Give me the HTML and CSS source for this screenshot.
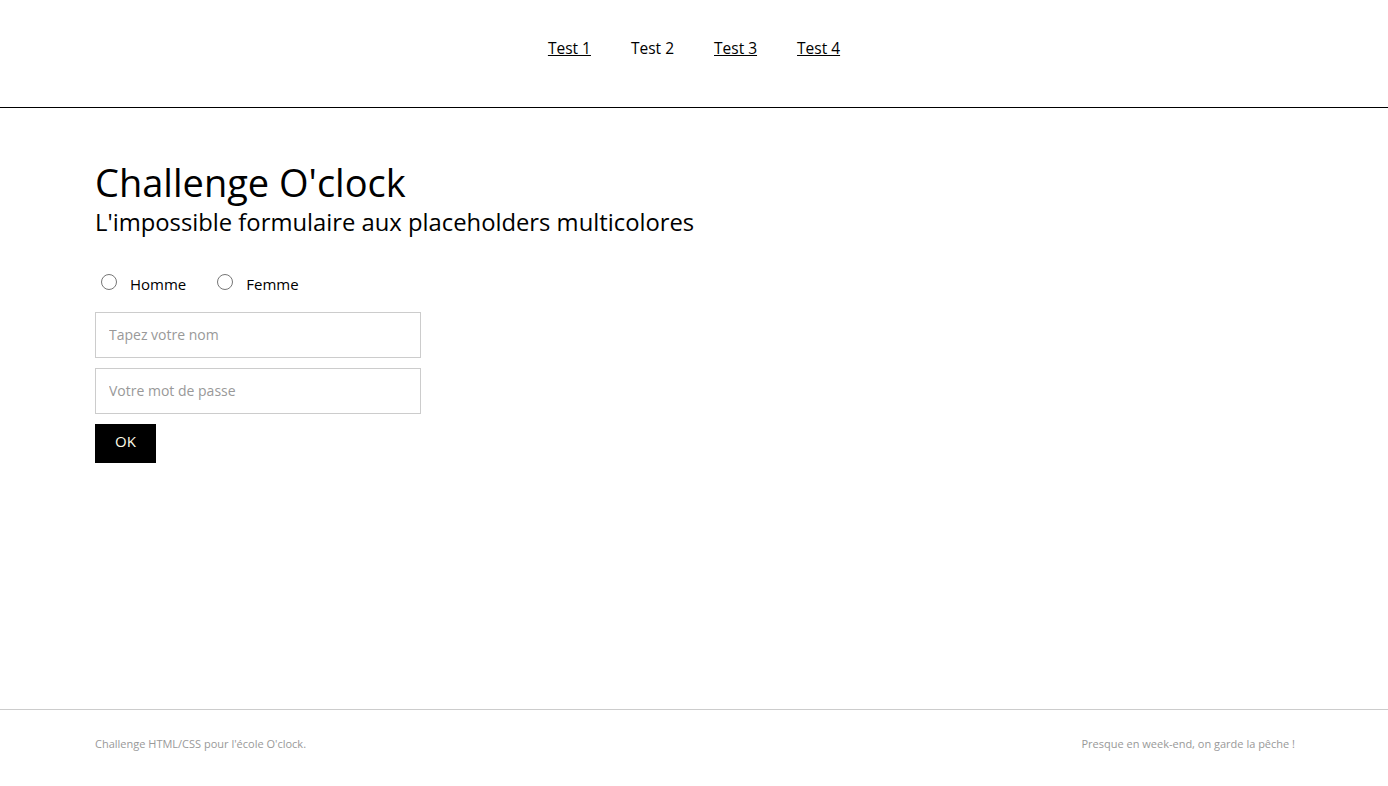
FILE: index.html
```html
<!DOCTYPE html>
<html lang="fr">
<head>
<meta charset="utf-8">
<title>Challenge O'clock</title>
<link rel="stylesheet" href="styles.css">
</head>
<body>
<header class="header">
  <nav class="nav">
    <a class="nav-link" href="#">Test 1</a>
    <span class="nav-link nav-current">Test 2</span>
    <a class="nav-link" href="#">Test 3</a>
    <a class="nav-link" href="#">Test 4</a>
  </nav>
</header>
<main class="main">
  <h1 class="title">Challenge O'clock</h1>
  <h2 class="subtitle">L'impossible formulaire aux placeholders multicolores</h2>
  <form class="form">
    <div class="radios">
      <label class="radio"><input type="radio" name="g"><span>Homme</span></label>
      <label class="radio"><input type="radio" name="g"><span>Femme</span></label>
    </div>
    <input class="field" type="text" placeholder="Tapez votre nom">
    <input class="field" type="password" placeholder="Votre mot de passe">
    <button class="btn" type="button">OK</button>
  </form>
</main>
<footer class="footer">
  <p class="foot-text">Challenge HTML/CSS pour l'école O'clock.</p>
  <p class="foot-text">Presque en week-end, on garde la pêche !</p>
</footer>
</body>
</html>
```
FILE: styles.css
```css
* { box-sizing: border-box; }
html, body { margin: 0; padding: 0; }
body {
  font-family: "Open Sans", "Liberation Sans", sans-serif;
  color: #000;
  background: #fff;
  min-height: 786px;
  display: flex;
  flex-direction: column;
}
.header {
  height: 108px;
  border-bottom: 1px solid #000;
  display: flex;
  justify-content: center;
  align-items: flex-start;
  padding-top: 36px;
}
.nav { display: flex; gap: 40px; }
.nav-link {
  color: #000;
  font-size: 15.5px;
  line-height: 24px;
  text-decoration: underline;
}
.nav-current { text-decoration: none; }
.main {
  flex: 1;
  padding: 52px 95px 0;
}
.title {
  margin: 0;
  font-size: 38px;
  font-weight: 400;
  line-height: 44px;
}
.subtitle {
  margin: 3px 0 0;
  font-size: 23.8px;
  font-weight: 400;
  line-height: 30px;
}
.form {
  display: flex;
  flex-direction: column;
  align-items: flex-start;
  margin-top: 35px;
  gap: 10px;
}
.radios { display: flex; gap: 25px; margin-bottom: 10px; }
.radio { display: flex; align-items: center; font-size: 15px; gap: 13px; }
.radio span { position: relative; top: 2px; }
.radio input { margin: 0 0 0 6px; width: 16px; height: 16px; }
.field {
  width: 326px;
  height: 46px;
  border: 1px solid #ccc;
  padding: 0 13px 2px;
  font-family: inherit;
  font-size: 14px;
}
.field::placeholder { color: #999; }
.btn {
  width: 61px;
  height: 39px;
  padding: 0 0 5px;
  background: #000;
  color: #fdfbe8;
  border: 0;
  font-family: inherit;
  font-size: 15px;
}
.footer {
  height: 77px;
  border-top: 1px solid #ccc;
  display: flex;
  justify-content: space-between;
  padding: 26px 93px 0 95px;
}
.foot-text { margin: 0; font-size: 11px; color: #999; }
```
